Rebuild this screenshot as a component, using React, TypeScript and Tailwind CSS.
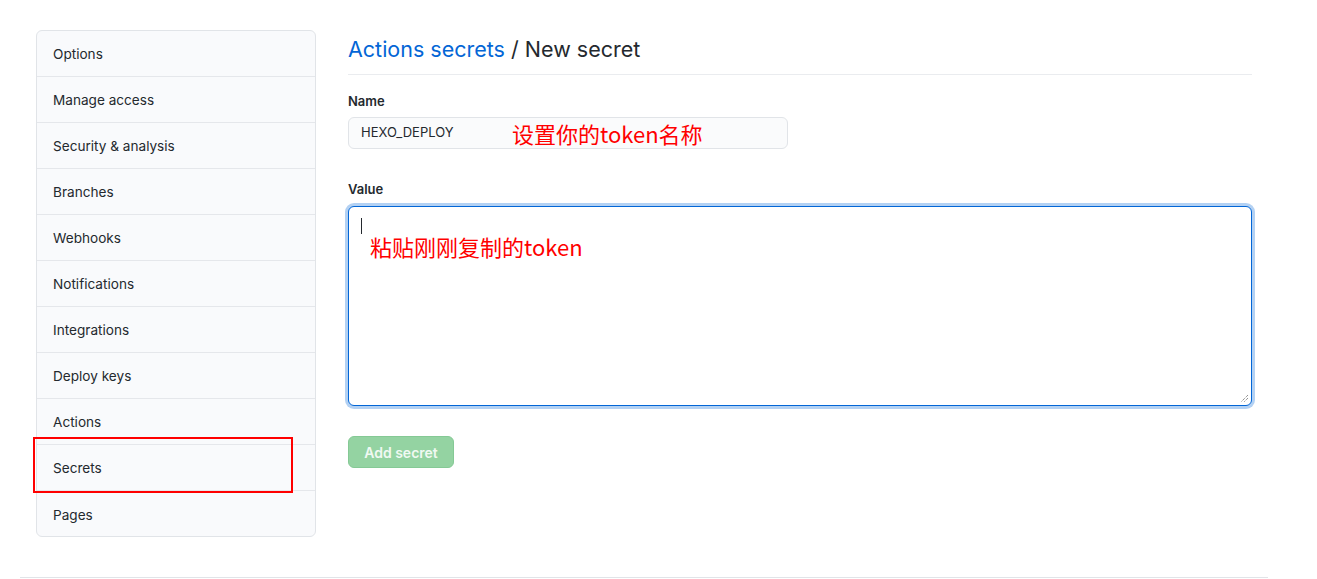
import React from "react";

const items = [
  "Options",
  "Manage access",
  "Security & analysis",
  "Branches",
  "Webhooks",
  "Notifications",
  "Integrations",
  "Deploy keys",
  "Actions",
  "Secrets",
  "Pages",
];

export default function App() {
  return (
    <div
      className="w-[1317px] h-[579px] bg-white overflow-hidden text-[#24292e]"
      style={{ fontFamily: "Inter, 'Noto Sans CJK SC', sans-serif" }}
    >
      <div className="w-[1248px] ml-[20px] h-[578px] border-b border-[#e1e4e8] pl-[16px] pt-[30px] flex gap-[32px]">
        <nav className="w-[280px] h-[507px] border border-[#e1e4e8] rounded-[6px] bg-[#f9fafc] flex flex-col">
          {items.map((it, i) => (
            <div
              key={it}
              className={`relative h-[46px] shrink-0 flex items-center pl-[16px] pt-[2px] text-[13.6px] ${
                i < items.length - 1 ? "border-b border-[#e5e7eb]" : ""
              }`}
            >
              {it}
              {it === "Secrets" && (
                <div className="absolute left-[-4px] top-[-8px] w-[260px] h-[56px] border-2 border-[#ff0000]" />
              )}
            </div>
          ))}
        </nav>
        <main className="w-[904px]">
          <div className="h-[45px] border-b border-[#eaecef] flex items-start">
            <h2 className="text-[21.5px] leading-[38px] font-normal">
              <span className="text-[#0366d6]">Actions secrets</span>
              <span> / New secret</span>
            </h2>
          </div>
          <label className="block mt-[16px] text-[13px] font-semibold leading-[20px]">Name</label>
          <div className="mt-[6px] flex items-center">
            <div className="relative w-[440px] h-[32px] bg-[#fafbfc] border border-[#e1e4e8] rounded-[6px] flex items-center pl-[12px] text-[13px]">
              HEXO_DEPLOY
              <span
                className="absolute left-[163px] top-[0px] text-[22px] leading-[30px] text-[#ff0000]"
                style={{ fontFamily: "'Noto Sans CJK SC', sans-serif" }}
              >
                设置你的token名称
              </span>
            </div>
          </div>
          <label className="block mt-[30px] text-[13px] font-semibold leading-[20px]">Value</label>
          <div className="relative mt-[7px] w-[904px] h-[200px] bg-white border border-[#0366d6] rounded-[6px] shadow-[0_0_0_3px_rgba(3,102,214,0.3)]">
            <div className="absolute left-[12px] top-[11px] w-[1px] h-[16px] bg-[#24292e]" />
            <span
              className="absolute left-[21px] top-[24px] text-[22px] leading-[30px] text-[#ff0000]"
              style={{ fontFamily: "'Noto Sans CJK SC', sans-serif" }}
            >
              粘贴刚刚复制的token
            </span>
            <svg className="absolute right-[2px] bottom-[2px]" width="9" height="9" viewBox="0 0 9 9">
              <path d="M8 1 L1 8 M8 4 L4 8" stroke="#666" strokeWidth="1" strokeDasharray="1 1" />
            </svg>
          </div>
          <button className="mt-[30px] h-[32px] w-[106px] rounded-[6px] bg-[#94d3a2] border border-[#85c995] text-[14px] font-semibold text-[#f0f9f2]">
            Add secret
          </button>
        </main>
      </div>
    </div>
  );
}
